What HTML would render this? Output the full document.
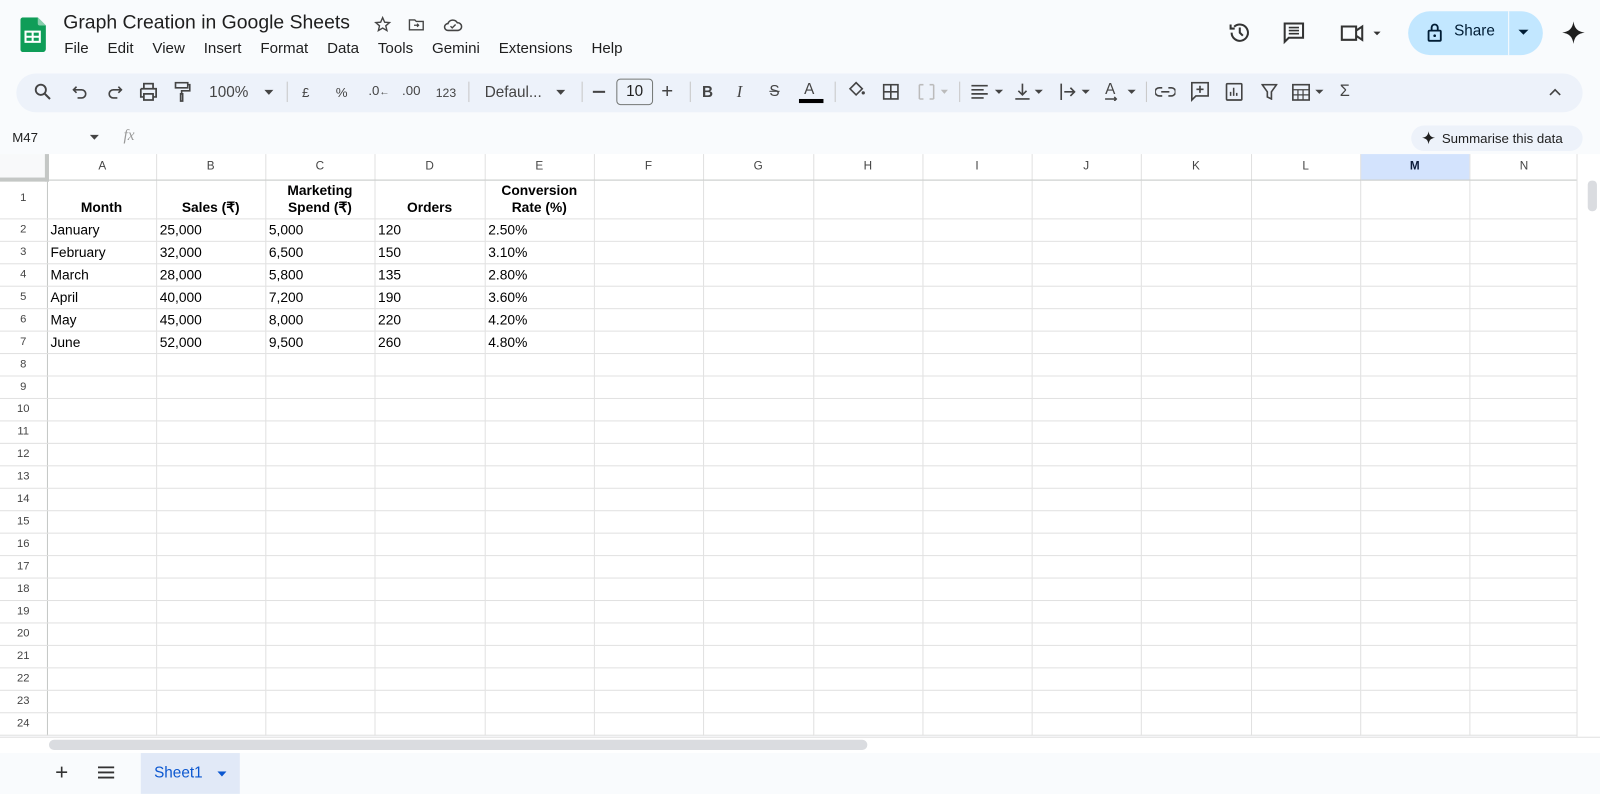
<!DOCTYPE html>
<html><head><meta charset="utf-8"><style>
*{box-sizing:border-box;margin:0;padding:0}
body{width:1600px;height:789px;overflow:hidden;background:#f9fbfd;font-family:"Liberation Sans",Arial,sans-serif;position:relative;color:#1f1f1f}
#w{position:absolute;left:0;top:0;width:1568px;height:773px;transform:scale(1.0204);transform-origin:0 0}
.abs{position:absolute}
.title{left:62px;top:12px;font-size:19px;color:#1f1f1f}
.menu{left:63px;top:40px;font-size:14.8px;display:flex;gap:0}
.menu span{margin-right:18.5px}
.tb{left:16px;top:72px;width:1535px;height:38px;background:#edf2fa;border-radius:19px}
.ic{position:absolute;top:80px;font-size:14px;color:#444}
svg{position:absolute}
table{border-collapse:collapse;table-layout:fixed;position:absolute;left:0;top:151px;background:#fff}
td{border-right:1px solid #e1e1e1;border-bottom:1px solid #e1e1e1;font-size:13.5px;padding:0 3px;height:22px;white-space:nowrap;overflow:hidden;color:#000}
td.rh{background:#fff;color:#444;font-size:11px;text-align:center;border-right:1px solid #c4c7c5;padding:0}
tr.ch td{background:#fff;color:#444;font-size:11.5px;text-align:center;height:25px;border-bottom:1px solid #c4c7c5}
tr.r1 td{height:38px;font-weight:bold;text-align:center;vertical-align:bottom;line-height:17px;padding-bottom:2px}
</style></head><body><div id="w">
<svg style="left:20px;top:17px" width="25" height="34" viewBox="0 0 25 34"><path d="M2 0h15l8 8v23a3 3 0 0 1-3 3H2a3 3 0 0 1-2-3V3a3 3 0 0 1 2-3z" fill="#0f9d58"/><path d="M17 0v6a2 2 0 0 0 2 2h6z" fill="#87ceac"/><rect x="5" y="14" width="14" height="10" fill="none" stroke="#fff" stroke-width="2"/><path d="M5 19h14M12 14v10" stroke="#fff" stroke-width="2"/></svg>
<div class="abs title">Graph Creation in Google Sheets</div>
<svg style="left:366px;top:15px" width="18" height="18" viewBox="0 0 24 24"><path d="M12 3l2.6 6 6.4.5-4.9 4.2 1.5 6.3L12 16.6 6.4 20l1.5-6.3L3 9.5 9.4 9z" fill="none" stroke="#444" stroke-width="1.8"/></svg>
<svg style="left:399px;top:15px" width="18" height="18" viewBox="0 0 24 24"><path d="M3 6h7l2 2h9v11H3z" fill="none" stroke="#444" stroke-width="1.8"/><path d="M9 13h6m-2-2 2 2-2 2" stroke="#444" stroke-width="1.6" fill="none"/></svg>
<svg style="left:434px;top:15px" width="20" height="18" viewBox="0 0 24 20"><path d="M6 17a4 4 0 0 1 0-8 6 6 0 0 1 11-1 4.5 4.5 0 0 1 1 9z" fill="none" stroke="#444" stroke-width="1.8"/><path d="M9 12l2 2 4-4" stroke="#444" stroke-width="1.6" fill="none"/></svg>
<div class="abs menu"><span>File</span><span>Edit</span><span>View</span><span>Insert</span><span>Format</span><span>Data</span><span>Tools</span><span>Gemini</span><span>Extensions</span><span>Help</span></div>
<svg style="left:1203px;top:20px" width="24" height="24" viewBox="0 0 24 24"><path d="M4 12a8 8 0 1 0 2.5-5.8M3 4v4h4M12 7v5l3 3" fill="none" stroke="#333" stroke-width="2"/></svg>
<svg style="left:1256px;top:20px" width="24" height="24" viewBox="0 0 24 24"><path d="M3 3h18v14H7l-4 4z" fill="none" stroke="#333" stroke-width="2"/><path d="M7 7h10M7 10h10M7 13h10" stroke="#333" stroke-width="1.6"/></svg>
<svg style="left:1313px;top:21px" width="42" height="22" viewBox="0 0 42 22"><path d="M2 5h14v13H2zM16 9l6-4v13l-6-4" fill="none" stroke="#333" stroke-width="2"/><path d="M33 10h7l-3.5 3.5z" fill="#333"/></svg>
<div class="abs" style="left:1380px;top:11px;width:132px;height:43px;background:#c2e7ff;border-radius:22px"></div>
<div class="abs" style="left:1478px;top:11px;width:1px;height:43px;background:#f9fbfd"></div>
<svg style="left:1398px;top:22px" width="16" height="20" viewBox="0 0 16 20"><rect x="2" y="8" width="12" height="10" rx="1" fill="none" stroke="#001d35" stroke-width="1.8"/><path d="M5 8V5a3 3 0 0 1 6 0v3" fill="none" stroke="#001d35" stroke-width="1.8"/><circle cx="8" cy="13" r="1.3" fill="#001d35"/></svg>
<div class="abs" style="left:1425px;top:22px;font-size:15px;color:#001d35">Share</div>
<svg style="left:1488px;top:29px" width="10" height="6"><path d="M0 0h10L5 5z" fill="#001d35"/></svg>
<svg style="left:1530px;top:20px" width="24" height="24" viewBox="0 0 24 24"><path d="M12 1C13 8 16 11 23 12 16 13 13 16 12 23 11 16 8 13 1 12 8 11 11 8 12 1z" fill="#1f1f1f"/></svg>
<div class="abs tb"></div>
<svg style="left:33px;top:81px" width="18" height="18" viewBox="0 0 18 18"><circle cx="7" cy="7" r="5" fill="none" stroke="#444" stroke-width="1.8"/><path d="M11 11l5 5" stroke="#444" stroke-width="2"/></svg>
<svg style="left:71px;top:82px" width="16" height="16" viewBox="0 0 16 16"><path d="M4 3L1 6l3 3M1 6h8a4 4 0 0 1 0 8H5" fill="none" stroke="#444" stroke-width="1.6"/></svg>
<svg style="left:104px;top:82px" width="16" height="16" viewBox="0 0 16 16"><path d="M12 3l3 3-3 3M15 6H7a4 4 0 0 0 0 8h4" fill="none" stroke="#444" stroke-width="1.6"/></svg>
<svg style="left:136px;top:81px" width="19" height="18" viewBox="0 0 19 18"><path d="M5 1h9v5H5zM2 6h15v8h-3M5 14H2V6M5 11h9v6H5z" fill="none" stroke="#444" stroke-width="1.7"/></svg>
<svg style="left:171px;top:80px" width="16" height="20" viewBox="0 0 16 20"><path d="M1 1h12v5H1zM13 3h2v6H7v3M6 12h2v7H6z" fill="none" stroke="#444" stroke-width="1.6"/></svg>
<div class="ic" style="left:205px;top:82px;font-size:15px">100%</div>
<svg style="left:259px;top:88px" width="9" height="5"><path d="M0 0h9L4.5 5z" fill="#444"/></svg>
<div class="abs" style="left:281px;top:80px;width:1px;height:20px;background:#c7c7c7"></div>
<div class="ic" style="left:296px;top:83px;font-size:13px">£</div>
<div class="ic" style="left:329px;top:83px;font-size:13px">%</div>
<div class="ic" style="left:361px;top:81px;font-size:13px">.0<span style="font-size:10px">←</span></div>
<div class="ic" style="left:394px;top:81px;font-size:13px">.00</div>
<div class="ic" style="left:427px;top:84px;font-size:12px">123</div>
<div class="abs" style="left:459px;top:80px;width:1px;height:20px;background:#c7c7c7"></div>
<div class="ic" style="left:475px;top:82px;font-size:15px">Defaul...</div>
<svg style="left:545px;top:88px" width="9" height="5"><path d="M0 0h9L4.5 5z" fill="#444"/></svg>
<div class="abs" style="left:570px;top:80px;width:1px;height:20px;background:#c7c7c7"></div>
<div class="abs" style="left:581px;top:89px;width:12px;height:2px;background:#444"></div>
<div class="abs" style="left:604px;top:77px;width:36px;height:26px;border:1px solid #747775;border-radius:4px;font-size:15px;text-align:center;line-height:24px;color:#1f1f1f">10</div>
<div class="ic" style="left:648px;top:79px;font-size:20px">+</div>
<div class="abs" style="left:676px;top:80px;width:1px;height:20px;background:#c7c7c7"></div>
<div class="ic" style="left:688px;top:82px;font-size:15px;font-weight:bold">B</div>
<div class="ic" style="left:722px;top:82px;font-size:16px;font-style:italic;font-family:'Liberation Serif',serif">I</div>
<div class="ic" style="left:754px;top:81px;font-size:15px;text-decoration:line-through">S</div>
<div class="ic" style="left:788px;top:79px;font-size:15px">A</div>
<div class="abs" style="left:783px;top:97px;width:24px;height:4px;background:#000"></div>
<div class="abs" style="left:818px;top:80px;width:1px;height:20px;background:#c7c7c7"></div>
<svg style="left:830px;top:79px" width="18" height="16" viewBox="0 0 18 16"><path d="M3 8l6-6 6 6-6 6z" fill="none" stroke="#444" stroke-width="1.6"/><circle cx="16" cy="12" r="1.6" fill="#444"/></svg>
<svg style="left:865px;top:82px" width="16" height="16"><path d="M1 1h14v14H1zM8 1v14M1 8h14" fill="none" stroke="#444" stroke-width="1.6"/></svg>
<svg style="left:900px;top:82px" width="30" height="16"><path d="M1 1h4M11 1h4M1 15h4M11 15h4M1 1v14M15 1v14" fill="none" stroke="#bbb" stroke-width="1.5"/><path d="M22 6h7l-3.5 4z" fill="#bbb"/></svg>
<div class="abs" style="left:940px;top:80px;width:1px;height:20px;background:#c7c7c7"></div>
<svg style="left:951px;top:82px" width="34" height="16"><path d="M1 2h16M1 6h12M1 10h16M1 14h12" stroke="#444" stroke-width="1.6"/><path d="M24 6h8l-4 4z" fill="#444"/></svg>
<svg style="left:994px;top:81px" width="34" height="18"><path d="M8 1v11M4 8l4 4 4-4M1 16h14" stroke="#444" stroke-width="1.6" fill="none"/><path d="M20 7h8l-4 4z" fill="#444"/></svg>
<svg style="left:1038px;top:81px" width="34" height="18"><path d="M2 1v16M5 9h10M11 5l4 4-4 4" stroke="#444" stroke-width="1.6" fill="none"/><path d="M22 7h8l-4 4z" fill="#444"/></svg>
<div class="ic" style="left:1083px;top:79px;font-size:15px">A</div>
<svg style="left:1082px;top:81px" width="34" height="18"><path d="M1 16h11M10 14l2 2-2 2" stroke="#444" stroke-width="1.4" fill="none"/><path d="M23 7h8l-4 4z" fill="#444"/></svg>
<div class="abs" style="left:1123px;top:80px;width:1px;height:20px;background:#c7c7c7"></div>
<svg style="left:1132px;top:84px" width="20" height="12"><path d="M7 2H4a4 4 0 0 0 0 8h3M13 2h3a4 4 0 0 1 0 8h-3M6 6h8" stroke="#444" stroke-width="1.6" fill="none"/></svg>
<svg style="left:1167px;top:80px" width="18" height="20"><path d="M1 1h16v13H5l-4 4z" stroke="#444" stroke-width="1.6" fill="none"/><path d="M9 4v7M5.5 7.5h7" stroke="#444" stroke-width="1.6"/></svg>
<svg style="left:1201px;top:81px" width="17" height="18"><rect x="1" y="1" width="15" height="16" rx="1" stroke="#444" stroke-width="1.6" fill="none"/><path d="M5 13V9M8 13V5M11 13v-3" stroke="#444" stroke-width="1.5"/></svg>
<svg style="left:1236px;top:82px" width="16" height="16"><path d="M1 1h14l-5 7v7l-4-2V8z" stroke="#444" stroke-width="1.6" fill="none"/></svg>
<svg style="left:1266px;top:81px" width="36" height="18"><rect x="1" y="2" width="16" height="15" stroke="#444" stroke-width="1.6" fill="none"/><path d="M1 7h16M1 12h16M6 7v10M11 7v10" stroke="#444" stroke-width="1.2"/><path d="M23 7h8l-4 4z" fill="#444"/></svg>
<div class="ic" style="left:1313px;top:81px;font-size:16px">Σ</div>
<svg style="left:1518px;top:86px" width="12" height="8"><path d="M1 7l5-5 5 5" stroke="#444" stroke-width="1.6" fill="none"/></svg>
<div class="abs" style="left:12px;top:127px;font-size:13px;color:#1f1f1f">M47</div>
<svg style="left:88px;top:132px" width="9" height="5"><path d="M0 0h9L4.5 5z" fill="#444"/></svg>
<div class="abs" style="left:121px;top:125px;font-size:15px;font-style:italic;color:#999;font-family:'Liberation Serif',serif">fx</div>
<div class="abs" style="left:1383px;top:123px;width:168px;height:25px;background:#edf2fa;border-radius:13px"></div>
<svg style="left:1393px;top:128px" width="14" height="14" viewBox="0 0 24 24"><path d="M12 1C13 8 16 11 23 12 16 13 13 16 12 23 11 16 8 13 1 12 8 11 11 8 12 1z" fill="#1f1f1f"/></svg>
<div class="abs" style="left:1413px;top:128px;font-size:13px;color:#1f1f1f">Summarise this data</div>
<table>
<colgroup><col style="width:46px"><col style="width:107px"><col style="width:107px"><col style="width:107px"><col style="width:108px"><col style="width:107px"><col style="width:107px"><col style="width:108px"><col style="width:107px"><col style="width:107px"><col style="width:107px"><col style="width:108px"><col style="width:107px"><col style="width:107px"><col style="width:107px"></colgroup>
<tr class="ch"><td style="background:#f8f9fa;border-right:4px solid #c4c7c5;border-bottom:4px solid #c4c7c5"></td><td>A</td><td>B</td><td>C</td><td>D</td><td>E</td><td>F</td><td>G</td><td>H</td><td>I</td><td>J</td><td>K</td><td>L</td><td style="background:#d3e3fd;font-weight:bold;color:#0b1b3a">M</td><td>N</td></tr>
<tr class="r1"><td class="rh" style="vertical-align:middle;font-weight:normal">1</td><td>Month</td><td>Sales (₹)</td><td>Marketing<br>Spend (₹)</td><td>Orders</td><td>Conversion<br>Rate (%)</td><td></td><td></td><td></td><td></td><td></td><td></td><td></td><td></td><td></td></tr>
<tr><td class="rh">2</td><td>January</td><td>25,000</td><td>5,000</td><td>120</td><td>2.50%</td><td></td><td></td><td></td><td></td><td></td><td></td><td></td><td></td><td></td></tr>
<tr><td class="rh">3</td><td>February</td><td>32,000</td><td>6,500</td><td>150</td><td>3.10%</td><td></td><td></td><td></td><td></td><td></td><td></td><td></td><td></td><td></td></tr>
<tr><td class="rh">4</td><td>March</td><td>28,000</td><td>5,800</td><td>135</td><td>2.80%</td><td></td><td></td><td></td><td></td><td></td><td></td><td></td><td></td><td></td></tr>
<tr><td class="rh">5</td><td>April</td><td>40,000</td><td>7,200</td><td>190</td><td>3.60%</td><td></td><td></td><td></td><td></td><td></td><td></td><td></td><td></td><td></td></tr>
<tr><td class="rh">6</td><td>May</td><td>45,000</td><td>8,000</td><td>220</td><td>4.20%</td><td></td><td></td><td></td><td></td><td></td><td></td><td></td><td></td><td></td></tr>
<tr><td class="rh">7</td><td>June</td><td>52,000</td><td>9,500</td><td>260</td><td>4.80%</td><td></td><td></td><td></td><td></td><td></td><td></td><td></td><td></td><td></td></tr>
<tr><td class="rh">8</td><td></td><td></td><td></td><td></td><td></td><td></td><td></td><td></td><td></td><td></td><td></td><td></td><td></td><td></td></tr>
<tr><td class="rh">9</td><td></td><td></td><td></td><td></td><td></td><td></td><td></td><td></td><td></td><td></td><td></td><td></td><td></td><td></td></tr>
<tr><td class="rh">10</td><td></td><td></td><td></td><td></td><td></td><td></td><td></td><td></td><td></td><td></td><td></td><td></td><td></td><td></td></tr>
<tr><td class="rh">11</td><td></td><td></td><td></td><td></td><td></td><td></td><td></td><td></td><td></td><td></td><td></td><td></td><td></td><td></td></tr>
<tr><td class="rh">12</td><td></td><td></td><td></td><td></td><td></td><td></td><td></td><td></td><td></td><td></td><td></td><td></td><td></td><td></td></tr>
<tr><td class="rh">13</td><td></td><td></td><td></td><td></td><td></td><td></td><td></td><td></td><td></td><td></td><td></td><td></td><td></td><td></td></tr>
<tr><td class="rh">14</td><td></td><td></td><td></td><td></td><td></td><td></td><td></td><td></td><td></td><td></td><td></td><td></td><td></td><td></td></tr>
<tr><td class="rh">15</td><td></td><td></td><td></td><td></td><td></td><td></td><td></td><td></td><td></td><td></td><td></td><td></td><td></td><td></td></tr>
<tr><td class="rh">16</td><td></td><td></td><td></td><td></td><td></td><td></td><td></td><td></td><td></td><td></td><td></td><td></td><td></td><td></td></tr>
<tr><td class="rh">17</td><td></td><td></td><td></td><td></td><td></td><td></td><td></td><td></td><td></td><td></td><td></td><td></td><td></td><td></td></tr>
<tr><td class="rh">18</td><td></td><td></td><td></td><td></td><td></td><td></td><td></td><td></td><td></td><td></td><td></td><td></td><td></td><td></td></tr>
<tr><td class="rh">19</td><td></td><td></td><td></td><td></td><td></td><td></td><td></td><td></td><td></td><td></td><td></td><td></td><td></td><td></td></tr>
<tr><td class="rh">20</td><td></td><td></td><td></td><td></td><td></td><td></td><td></td><td></td><td></td><td></td><td></td><td></td><td></td><td></td></tr>
<tr><td class="rh">21</td><td></td><td></td><td></td><td></td><td></td><td></td><td></td><td></td><td></td><td></td><td></td><td></td><td></td><td></td></tr>
<tr><td class="rh">22</td><td></td><td></td><td></td><td></td><td></td><td></td><td></td><td></td><td></td><td></td><td></td><td></td><td></td><td></td></tr>
<tr><td class="rh">23</td><td></td><td></td><td></td><td></td><td></td><td></td><td></td><td></td><td></td><td></td><td></td><td></td><td></td><td></td></tr>
<tr><td class="rh">24</td><td></td><td></td><td></td><td></td><td></td><td></td><td></td><td></td><td></td><td></td><td></td><td></td><td></td><td></td></tr>
</table>
<div class="abs" style="left:1545px;top:151px;width:30px;height:571px;background:#fff;border-left:1px solid #e1e1e1"></div>
<div class="abs" style="left:1556px;top:177px;width:9px;height:30px;background:#dadce0;border-radius:4px"></div>
<div class="abs" style="left:0;top:722px;width:1575px;height:16px;background:#fff;border-top:1px solid #e1e1e1"></div>
<div class="abs" style="left:48px;top:725px;width:802px;height:10px;background:#dadce0;border-radius:5px"></div>
<div class="abs" style="left:0;top:738px;width:1575px;height:40px;background:#f9fbfd"></div>
<div class="abs" style="left:54px;top:744px;font-size:22px;color:#333">+</div>
<svg style="left:96px;top:751px" width="16" height="12"><path d="M0 1h16M0 6h16M0 11h16" stroke="#333" stroke-width="1.8"/></svg>
<div class="abs" style="left:138px;top:738px;width:97px;height:40px;background:#e1e9f7"></div>
<div class="abs" style="left:151px;top:749px;font-size:15px;color:#0b57d0">Sheet1</div>
<svg style="left:213px;top:756px" width="9" height="5"><path d="M0 0h9L4.5 5z" fill="#0b57d0"/></svg>
</div></body></html>
